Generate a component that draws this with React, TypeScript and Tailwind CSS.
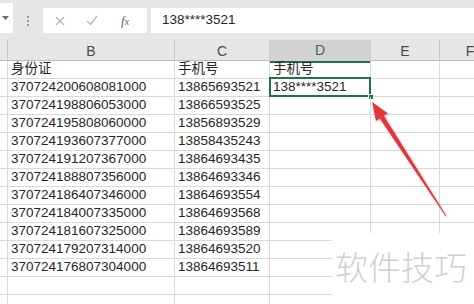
import React from "react";

const B = [
  "370724200608081000",
  "370724198806053000",
  "370724195808060000",
  "370724193607377000",
  "370724191207367000",
  "370724188807356000",
  "370724186407346000",
  "370724184007335000",
  "370724181607325000",
  "370724179207314000",
  "370724176807304000",
];
const C = [
  "13865693521",
  "13866593525",
  "13856893529",
  "13858435243",
  "13864693435",
  "13864693346",
  "13864693554",
  "13864693568",
  "13864693589",
  "13864693520",
  "13864693511",
];

const font = { fontFamily: '"Liberation Sans", Arial, "Noto Sans CJK SC", sans-serif' };

function Row({ b, c, d, selected }: { b?: string; c?: string; d?: string; selected?: boolean }) {
  const cell = "h-[18px] border-r border-b border-[#dadada] flex items-center pl-[3px] text-[13.5px] text-[#262626] whitespace-nowrap overflow-visible";
  return (
    <>
      <div className={cell}></div>
      <div className={cell}>{b}</div>
      <div className={cell}>{c}</div>
      <div className={cell + " relative"}>
        {d}
        {selected && (
          <>
            <div className="absolute left-[-1px] top-[-2px] right-[-1px] bottom-[-1px] border-2 border-[#217346]"></div>
            <div className="absolute right-[-4px] bottom-[-4px] w-[6px] h-[6px] bg-[#217346] border border-white"></div>
          </>
        )}
      </div>
      <div className={cell}></div>
      <div className={cell + " border-r-0"}></div>
    </>
  );
}

export default function App() {
  const rows = [];
  rows.push(<Row key="h" b="身份证" c="手机号" d="手机号" />);
  for (let i = 0; i < B.length; i++) {
    rows.push(<Row key={i} b={B[i]} c={C[i]} d={i === 0 ? "138****3521" : undefined} selected={i === 0} />);
  }
  rows.push(<Row key="e1" />);
  rows.push(<Row key="e2" />);
  return (
    <div className="w-[474px] h-[304px] overflow-hidden relative bg-white" style={font}>
      {/* toolbar */}
      <div className="h-[40px] bg-[#e6e6e6] flex items-start">
        <div className="w-[13px] h-[30px] mt-[3px] bg-white flex items-center pl-[2px]">
          <svg width="7" height="4" viewBox="0 0 7 4"><path d="M0 0 L7 0 L3.5 4 Z" fill="#6b6b6b" /></svg>
        </div>
        <div className="ml-[14px] mt-[16px] flex flex-col gap-[2px]">
          <div className="w-[2px] h-[2px] bg-[#9a9a9a]"></div>
          <div className="w-[2px] h-[2px] bg-[#9a9a9a]"></div>
          <div className="w-[2px] h-[2px] bg-[#9a9a9a]"></div>
        </div>
        <div className="ml-[14px] mt-[8px] w-[104px] h-[25px] bg-white relative">
          <svg className="absolute left-[12px] top-[8px]" width="10" height="10" viewBox="0 0 10 10">
            <path d="M1 1 L9 9 M9 1 L1 9" stroke="#b8b8b8" strokeWidth="1.3" />
          </svg>
          <svg className="absolute left-[43px] top-[7px]" width="12" height="11" viewBox="0 0 12 11">
            <path d="M1 6 L4.5 9.5 L11 1" stroke="#b8b8b8" strokeWidth="1.4" fill="none" />
          </svg>
          <span className="absolute left-[78px] top-[3px] text-[13px] italic text-[#666]" style={{ fontFamily: '"Liberation Serif", serif' }}>
            f<span className="text-[10px]">x</span>
          </span>
        </div>
        <div className="ml-[4px] mt-[8px] flex-1 h-[25px] bg-white flex items-center pl-[11px] text-[13.5px] text-[#262626]">
          138****3521
        </div>
      </div>
      {/* header row */}
      <div className="grid grid-cols-[8px_167px_95px_101px_69px_60px] h-[21px] bg-[#e6e6e6] border-b border-[#bdbdbd] text-[14px] text-[#4a4a4a]">
        <div className="border-r border-[#c8c8c8]"></div>
        <div className="border-r border-[#c8c8c8] flex items-center justify-center">B</div>
        <div className="border-r border-[#c8c8c8] flex items-center justify-center">C</div>
        <div className="border-r border-[#c8c8c8] bg-[#d2d2d2] border-b-2 border-b-[#217346] flex items-center justify-center text-[#3f6a50]">D</div>
        <div className="border-r border-[#c8c8c8] flex items-center justify-center">E</div>
        <div className="flex items-center justify-center">F</div>
      </div>
      {/* body */}
      <div className="grid grid-cols-[8px_167px_95px_101px_69px_60px]">{rows}</div>
      {/* watermark cover */}
      <div className="absolute left-[332px] top-[233px] right-0 bottom-0 bg-white"></div>
      <div
        className="absolute left-[335px] top-[250px] text-[33px] leading-none text-[#d0d0d0]"
        style={{ fontFamily: '"Noto Sans CJK SC", sans-serif', fontWeight: 300 }}
      >
        软件技巧
      </div>
      {/* red arrow */}
      <svg className="absolute left-0 top-0" width="474" height="304" viewBox="0 0 474 304">
        <defs>
          <filter id="sh" x="-20%" y="-20%" width="140%" height="140%">
            <feDropShadow dx="1" dy="1" stdDeviation="1" floodColor="#000" floodOpacity="0.25" />
          </filter>
        </defs>
        <polygon
          points="372,102 387.7,113.3 383.9,115.7 446.4,215.7 445.6,216.3 379.7,118.5 375.9,120.9"
          fill="#e2393c"
          filter="url(#sh)"
        />
      </svg>
    </div>
  );
}
